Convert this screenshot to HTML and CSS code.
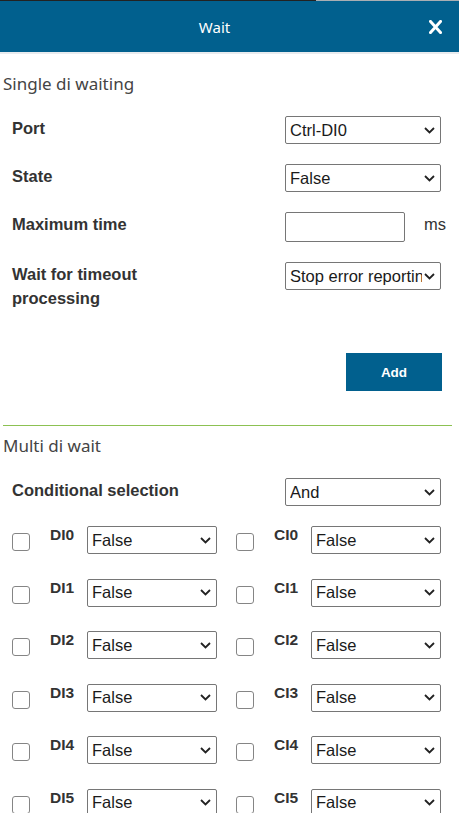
FILE: index.html
```html
<!DOCTYPE html>
<html lang="en">
<head>
<meta charset="utf-8">
<title>Wait</title>
<link rel="stylesheet" href="styles.css">
</head>
<body>
<div class="topstrip"><div class="ts-dark"></div><div class="ts-light"></div></div>
<header class="hdr">
  <div class="hdr-title">Wait</div>
  <svg class="close" width="13" height="14" viewBox="0 0 13 14"><path d="M1.5 1.5 L11.5 12.5 M11.5 1.5 L1.5 12.5" stroke="#fff" stroke-width="3" fill="none" stroke-linecap="square"/></svg>
</header>
<main class="content">
  <h2 class="sec-title first">Single di waiting</h2>
  <div class="frow">
    <div class="flabel">Port</div>
    <div class="fctl"><div class="sel"><span class="sel-text">Ctrl-DI0</span><svg class="chev" width="11" height="7" viewBox="0 0 11 7"><path d="M1 1 L5.5 5.5 L10 1" stroke="#222" stroke-width="1.8" fill="none"/></svg></div></div>
  </div>
  <div class="frow">
    <div class="flabel">State</div>
    <div class="fctl"><div class="sel"><span class="sel-text">False</span><svg class="chev" width="11" height="7" viewBox="0 0 11 7"><path d="M1 1 L5.5 5.5 L10 1" stroke="#222" stroke-width="1.8" fill="none"/></svg></div></div>
  </div>
  <div class="frow">
    <div class="flabel">Maximum time</div>
    <div class="fctl"><div class="inp"></div><span class="unit">ms</span></div>
  </div>
  <div class="frow last">
    <div class="flabel narrow">Wait for timeout processing</div>
    <div class="fctl"><div class="sel"><span class="sel-text">Stop error reporting</span><svg class="chev" width="11" height="7" viewBox="0 0 11 7"><path d="M1 1 L5.5 5.5 L10 1" stroke="#222" stroke-width="1.8" fill="none"/></svg></div></div>
  </div>
  <div class="actions"><button class="btn">Add</button></div>
  <div class="divider"></div>
  <h2 class="sec-title second">Multi di wait</h2>
  <div class="frow">
    <div class="flabel">Conditional selection</div>
    <div class="fctl"><div class="sel"><span class="sel-text">And</span><svg class="chev" width="11" height="7" viewBox="0 0 11 7"><path d="M1 1 L5.5 5.5 L10 1" stroke="#222" stroke-width="1.8" fill="none"/></svg></div></div>
  </div>
  <div class="mgrid">
    <div class="mcell"><span class="cb"></span><span class="mlabel">DI0</span><div class="sel small"><span class="sel-text">False</span><svg class="chev" width="11" height="7" viewBox="0 0 11 7"><path d="M1 1 L5.5 5.5 L10 1" stroke="#222" stroke-width="1.8" fill="none"/></svg></div></div>
    <div class="mcell"><span class="cb"></span><span class="mlabel">CI0</span><div class="sel small"><span class="sel-text">False</span><svg class="chev" width="11" height="7" viewBox="0 0 11 7"><path d="M1 1 L5.5 5.5 L10 1" stroke="#222" stroke-width="1.8" fill="none"/></svg></div></div>
    <div class="mcell"><span class="cb"></span><span class="mlabel">DI1</span><div class="sel small"><span class="sel-text">False</span><svg class="chev" width="11" height="7" viewBox="0 0 11 7"><path d="M1 1 L5.5 5.5 L10 1" stroke="#222" stroke-width="1.8" fill="none"/></svg></div></div>
    <div class="mcell"><span class="cb"></span><span class="mlabel">CI1</span><div class="sel small"><span class="sel-text">False</span><svg class="chev" width="11" height="7" viewBox="0 0 11 7"><path d="M1 1 L5.5 5.5 L10 1" stroke="#222" stroke-width="1.8" fill="none"/></svg></div></div>
    <div class="mcell"><span class="cb"></span><span class="mlabel">DI2</span><div class="sel small"><span class="sel-text">False</span><svg class="chev" width="11" height="7" viewBox="0 0 11 7"><path d="M1 1 L5.5 5.5 L10 1" stroke="#222" stroke-width="1.8" fill="none"/></svg></div></div>
    <div class="mcell"><span class="cb"></span><span class="mlabel">CI2</span><div class="sel small"><span class="sel-text">False</span><svg class="chev" width="11" height="7" viewBox="0 0 11 7"><path d="M1 1 L5.5 5.5 L10 1" stroke="#222" stroke-width="1.8" fill="none"/></svg></div></div>
    <div class="mcell"><span class="cb"></span><span class="mlabel">DI3</span><div class="sel small"><span class="sel-text">False</span><svg class="chev" width="11" height="7" viewBox="0 0 11 7"><path d="M1 1 L5.5 5.5 L10 1" stroke="#222" stroke-width="1.8" fill="none"/></svg></div></div>
    <div class="mcell"><span class="cb"></span><span class="mlabel">CI3</span><div class="sel small"><span class="sel-text">False</span><svg class="chev" width="11" height="7" viewBox="0 0 11 7"><path d="M1 1 L5.5 5.5 L10 1" stroke="#222" stroke-width="1.8" fill="none"/></svg></div></div>
    <div class="mcell"><span class="cb"></span><span class="mlabel">DI4</span><div class="sel small"><span class="sel-text">False</span><svg class="chev" width="11" height="7" viewBox="0 0 11 7"><path d="M1 1 L5.5 5.5 L10 1" stroke="#222" stroke-width="1.8" fill="none"/></svg></div></div>
    <div class="mcell"><span class="cb"></span><span class="mlabel">CI4</span><div class="sel small"><span class="sel-text">False</span><svg class="chev" width="11" height="7" viewBox="0 0 11 7"><path d="M1 1 L5.5 5.5 L10 1" stroke="#222" stroke-width="1.8" fill="none"/></svg></div></div>
    <div class="mcell"><span class="cb"></span><span class="mlabel">DI5</span><div class="sel small"><span class="sel-text">False</span><svg class="chev" width="11" height="7" viewBox="0 0 11 7"><path d="M1 1 L5.5 5.5 L10 1" stroke="#222" stroke-width="1.8" fill="none"/></svg></div></div>
    <div class="mcell"><span class="cb"></span><span class="mlabel">CI5</span><div class="sel small"><span class="sel-text">False</span><svg class="chev" width="11" height="7" viewBox="0 0 11 7"><path d="M1 1 L5.5 5.5 L10 1" stroke="#222" stroke-width="1.8" fill="none"/></svg></div></div>
  </div>
</main>
</body>
</html>
```
FILE: styles.css
```css
html, body {
  margin: 0;
  padding: 0;
  background: #fff;
}
body {
  font-family: "Liberation Sans", Arial, sans-serif;
  color: #333;
  overflow: hidden;
}
.topstrip {
  display: flex;
  height: 1px;
}
.ts-dark { width: 316px; background: #222; }
.ts-light { flex: 1; background: #a9aeb3; }
.hdr {
  display: flex;
  align-items: center;
  height: 51px;
  background: #01608e;
  padding-right: 17px;
  border-bottom: 2px solid #e8ebee;
}
.hdr-title {
  flex: 1;
  text-align: center;
  font-family: "Noto Sans", sans-serif;
  font-size: 15px;
  color: #fff;
}
.close { display: block; }
.content { padding: 0; }
.sec-title {
  margin: 0;
  font-family: "Noto Sans", sans-serif;
  font-weight: 400;
  font-size: 17px;
  line-height: 24px;
  color: #444;
  padding-left: 3px;
}
.sec-title.first { margin-top: 18px; margin-bottom: 20px; }
.sec-title.second { margin-top: 8px; margin-bottom: 20px; }
.frow {
  display: flex;
  align-items: flex-start;
  padding: 0 18px 0 12px;
  margin-bottom: 20px;
}
.frow.last { margin-bottom: 0; }
.flabel {
  flex: 0 0 190px;
  font-weight: 700;
  font-size: 16.5px;
  line-height: 24px;
  color: #333;
}
.flabel.narrow { flex-basis: 150px; }
.fctl {
  margin-left: auto;
  width: 156px;
  display: flex;
  align-items: flex-start;
}
.sel {
  box-sizing: border-box;
  width: 156px;
  height: 28px;
  border: 1px solid #767676;
  border-radius: 2px;
  display: flex;
  align-items: center;
  padding: 0 5px 0 4px;
  background: #fff;
}
.sel-text {
  flex: 1;
  min-width: 0;
  overflow: hidden;
  white-space: nowrap;
  font-size: 16.5px;
  color: #1a1a1a;
}
.chev { display: block; flex: 0 0 auto; margin-left: 2px; }
.inp {
  box-sizing: border-box;
  flex: 0 0 120px;
  width: 120px;
  height: 30px;
  border: 1px solid #767676;
  border-radius: 2px;
}
.unit {
  margin-left: 19px;
  font-size: 16.5px;
  line-height: 24px;
  color: #333;
  white-space: nowrap;
}
.actions {
  display: flex;
  justify-content: flex-end;
  padding-right: 17px;
  margin-top: 43px;
}
.btn {
  width: 96px;
  height: 38px;
  border: 0;
  background: #01608e;
  color: #fff;
  font-family: "Liberation Sans", Arial, sans-serif;
  font-weight: 700;
  font-size: 13.5px;
  padding: 0;
}
.divider {
  height: 1px;
  background: #8cc152;
  margin: 34px 7px 0 3px;
}
.mgrid {
  display: grid;
  grid-template-columns: 205px 205px;
  column-gap: 19px;
  row-gap: 24.5px;
  padding-left: 12px;
}
.mcell {
  display: flex;
  align-items: flex-start;
}
.cb {
  box-sizing: border-box;
  flex: 0 0 18px;
  width: 18px;
  height: 18px;
  margin-top: 7px;
  margin-right: 20px;
  border: 1.5px solid #858585;
  border-radius: 3px;
}
.mlabel {
  flex: 0 0 37px;
  font-weight: 700;
  font-size: 15.5px;
  line-height: 20px;
  margin-top: -1px;
  color: #333;
}
.sel.small { width: 130px; }
```
